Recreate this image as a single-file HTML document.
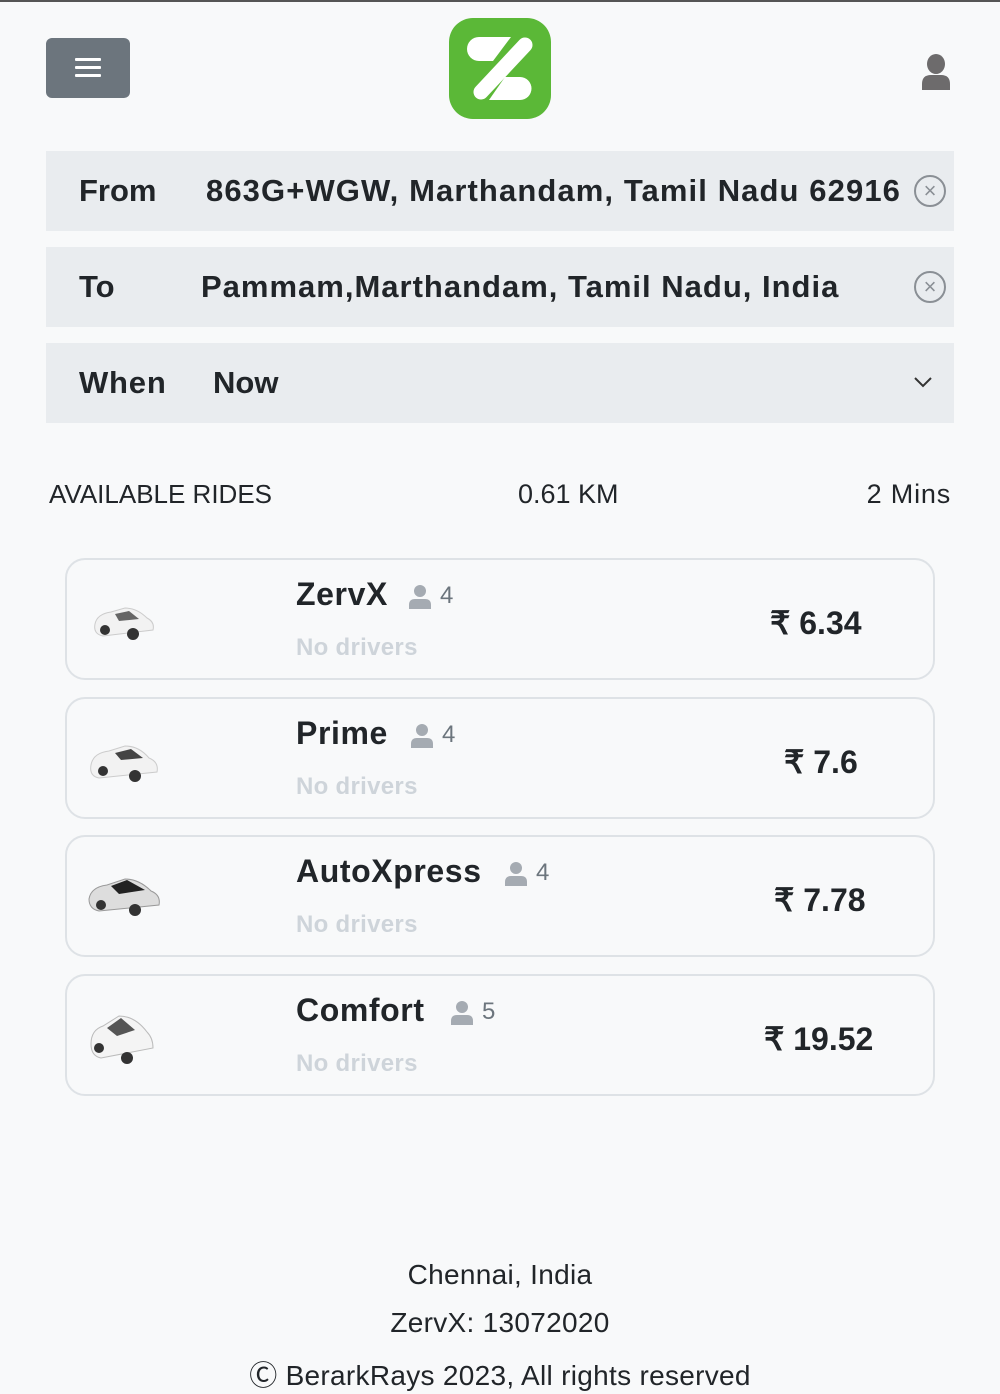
<!DOCTYPE html>
<html><head><meta charset="utf-8"><style>
*{box-sizing:border-box;margin:0;padding:0}
body{width:1000px;height:1388px;background:#f8f9fa;font-family:"Liberation Sans",sans-serif;color:#212529;position:relative;overflow:hidden}
.abs{position:absolute}
.bar{left:0;top:0;width:1000px;height:2px;background:#555}
.menu{left:46px;top:38px;width:84px;height:60px;background:#6c757d;border-radius:6px}
.menu i{position:absolute;left:29px;width:26px;height:2.5px;background:#fff;border-radius:1px}
.field{left:46px;width:908px;height:80px;background:#e9ecef;font-size:31px;font-weight:bold;color:#212529}
.field span{position:absolute;top:22px}
.x{position:absolute;right:8px;top:24px;width:32px;height:32px;border:2px solid #8a8f95;border-radius:50%;color:#8a8f95;font-size:22px;line-height:27px;text-align:center;font-weight:normal}
.hdr{top:479px;font-size:27px}
.card{left:65px;width:870px;height:122px;border:2px solid #dee2e6;border-radius:20px}
.name{position:absolute;left:229px;top:16px;font-size:32px;font-weight:bold;color:#212529;letter-spacing:0.6px}
.cap{position:absolute;top:22px;font-size:24px;color:#6c757d}
.nd{position:absolute;left:229px;top:74px;font-size:24px;font-weight:bold;color:#ced4da;letter-spacing:0.3px}
.price{position:absolute;top:44px;font-size:32px;font-weight:bold}
.foot{left:0;width:1000px;text-align:center;font-size:28px;color:#212529;letter-spacing:0.3px}
</style></head><body>
<div class="abs bar"></div>
<div class="abs menu"><i style="top:20px"></i><i style="top:28px"></i><i style="top:36px"></i></div>
<svg class="abs" style="left:449px;top:18px" width="102" height="101" viewBox="0 0 102 101"><rect width="102" height="101" rx="24" fill="#5bb837"/>
<path d="M30 19H62L44 43H30A12 12 0 0 1 30 19z" fill="#fff"/>
<line x1="76" y1="27" x2="32" y2="74" stroke="#fff" stroke-width="15" stroke-linecap="round"/>
<path d="M40 82L56 59H71A11.5 11.5 0 0 1 71 82z" fill="#fff"/></svg>
<svg class="abs" style="left:920px;top:54px" width="32" height="36" viewBox="0 0 32 36"><ellipse cx="16" cy="10" rx="9" ry="10" fill="#6d6b6c"/><path d="M2 36v-6q0-9 9-9h10q9 0 9 9v6z" fill="#6d6b6c"/></svg>
<div class="abs field" style="top:151px"><span style="left:33px">From</span><span style="left:160px;letter-spacing:1.1px">863G+WGW, Marthandam, Tamil Nadu 62916</span><div class="x">×</div></div>
<div class="abs field" style="top:247px"><span style="left:33px">To</span><span style="left:155px;letter-spacing:1px">Pammam,Marthandam, Tamil Nadu, India</span><div class="x">×</div></div>
<div class="abs field" style="top:343px"><span style="left:33px;letter-spacing:0.8px">When</span><span style="left:167px">Now</span>
<svg style="position:absolute;right:22px;top:34px" width="18" height="11"><path d="M1 1l8 8 8-8" stroke="#333" stroke-width="2" fill="none"/></svg></div>
<div class="abs hdr" style="left:49px;font-size:26px">AVAILABLE RIDES</div>
<div class="abs hdr" style="left:518px">0.61 KM</div>
<div class="abs hdr" style="right:49px;letter-spacing:0.8px">2 Mins</div>

<div class="abs card" style="top:558px"><svg class="abs" style="left:24px;top:42px" width="66" height="40"><path d="M4 22q2-10 16-12l14-4q12 0 22 10q8 4 6 12l-50 6q-10-2-8-12z" fill="#f2f2f2" stroke="#ccc"/><path d="M24 12l14-3 10 8-20 2z" fill="#666"/><circle cx="14" cy="28" r="5" fill="#333"/><circle cx="42" cy="32" r="6" fill="#333"/></svg>
<div class="name">ZervX</div><svg class="abs" style="left:342px;top:25px" width="22" height="24"><circle cx="11" cy="6" r="6" fill="#a5abb2"/><path d="M0 24v-4q0-6 6-6h10q6 0 6 6v4z" fill="#a5abb2"/></svg><div class="cap" style="left:373px">4</div>
<div class="nd">No drivers</div><div class="price" style="left:703px">₹ 6.34</div></div>

<div class="abs card" style="top:697px"><svg class="abs" style="left:20px;top:40px" width="76" height="46"><path d="M4 26q2-12 18-14l16-5q14 0 24 12q10 4 8 14l-58 6q-10-2-8-13z" fill="#f2f2f2" stroke="#ccc"/><path d="M28 14l16-4 12 9-22 2z" fill="#444"/><circle cx="16" cy="32" r="5" fill="#333"/><circle cx="48" cy="37" r="6" fill="#333"/></svg>
<div class="name">Prime</div><svg class="abs" style="left:344px;top:25px" width="22" height="24"><circle cx="11" cy="6" r="6" fill="#a5abb2"/><path d="M0 24v-4q0-6 6-6h10q6 0 6 6v4z" fill="#a5abb2"/></svg><div class="cap" style="left:375px">4</div>
<div class="nd">No drivers</div><div class="price" style="left:717px">₹ 7.6</div></div>

<div class="abs card" style="top:835px"><svg class="abs" style="left:20px;top:36px" width="76" height="46"><path d="M2 26q2-12 18-14l18-6q14 0 26 12q10 4 8 14l-60 6q-10-2-10-12z" fill="#ddd" stroke="#999"/><path d="M24 13l16-6 18 10-26 4z" fill="#222"/><circle cx="14" cy="32" r="5" fill="#333"/><circle cx="48" cy="37" r="6" fill="#333"/></svg>
<div class="name">AutoXpress</div><svg class="abs" style="left:438px;top:25px" width="22" height="24"><circle cx="11" cy="6" r="6" fill="#a5abb2"/><path d="M0 24v-4q0-6 6-6h10q6 0 6 6v4z" fill="#a5abb2"/></svg><div class="cap" style="left:469px">4</div>
<div class="nd">No drivers</div><div class="price" style="left:707px">₹ 7.78</div></div>

<div class="abs card" style="top:974px"><svg class="abs" style="left:20px;top:32px" width="72" height="60"><path d="M4 36q0-14 12-18l16-10q16 0 28 16q6 6 6 16l-52 10q-10-2-10-14z" fill="#f4f4f4" stroke="#bbb"/><path d="M20 20l14-10 14 12-18 6z" fill="#555"/><circle cx="12" cy="40" r="5" fill="#333"/><circle cx="40" cy="50" r="6" fill="#333"/></svg>
<div class="name">Comfort</div><svg class="abs" style="left:384px;top:25px" width="22" height="24"><circle cx="11" cy="6" r="6" fill="#a5abb2"/><path d="M0 24v-4q0-6 6-6h10q6 0 6 6v4z" fill="#a5abb2"/></svg><div class="cap" style="left:415px">5</div>
<div class="nd">No drivers</div><div class="price" style="left:697px">₹ 19.52</div></div>

<div class="abs foot" style="top:1259px">Chennai, India</div>
<div class="abs foot" style="top:1307px">ZervX: 13072020</div>
<div class="abs foot" style="top:1354px">Ⓒ BerarkRays 2023, All rights reserved</div>
</body></html>
